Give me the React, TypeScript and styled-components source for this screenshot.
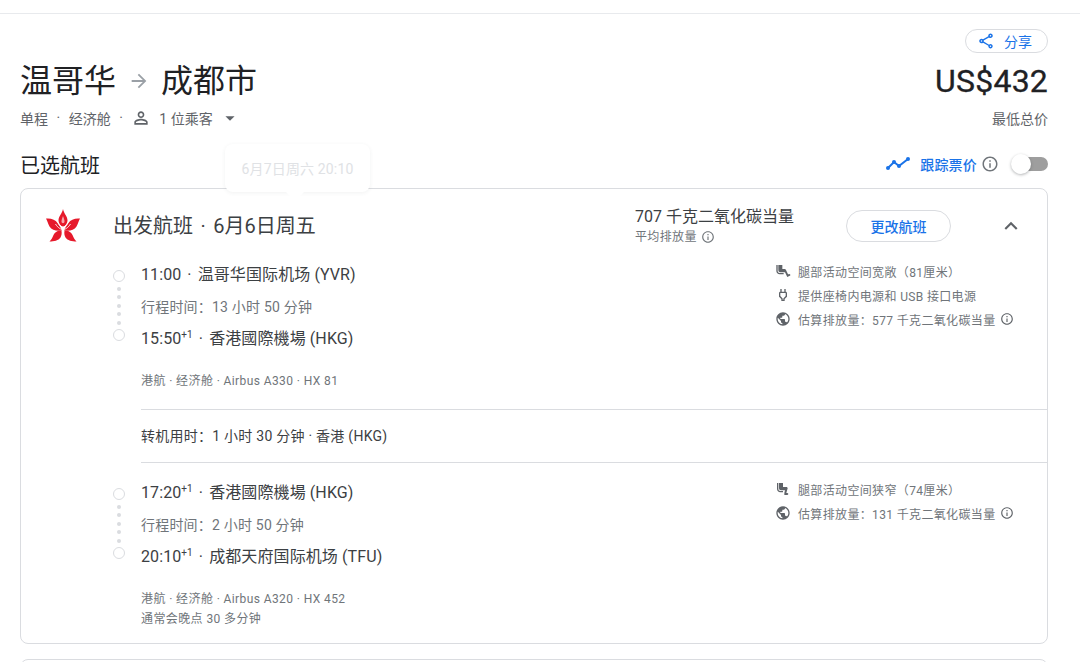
import React from 'react';
import styled, { createGlobalStyle } from 'styled-components';
import {
  MdArrowDropDown,
  MdArrowForward,
  MdInfoOutline,
  MdKeyboardArrowUp,
  MdOutlinePower,
  MdOutlineShare,
  MdPersonOutline,
  MdPublic,
  MdAirlineSeatLegroomExtra,
  MdAirlineSeatLegroomReduced,
} from 'react-icons/md';

const GlobalStyle = createGlobalStyle`
  html, body {
    margin: 0;
    padding: 0;
    background: #fff;
    font-family: Roboto, "Noto Sans CJK SC", "Liberation Sans", sans-serif;
    color: #202124;
  }
`;

const Page = styled.div`
  position: relative;
  width: 1080px;
  height: 662px;
  overflow: hidden;
  box-sizing: border-box;
  padding: 13px 32px 0 20px;
  background: #fff;
`;

const TopRule = styled.div`
  height: 1px;
  margin: 0 -32px 15px -20px;
  background: #e8eaed;
`;

const ShareRow = styled.div`
  display: flex;
  justify-content: flex-end;
  height: 24px;
`;

const ShareButton = styled.button`
  display: flex;
  align-items: center;
  justify-content: center;
  gap: 9px;
  box-sizing: border-box;
  width: 83px;
  height: 24px;
  padding: 0 4px 0 0;
  background: #fff;
  border: 1px solid #dadce0;
  border-radius: 12px;
  color: #1a73e8;
  font: inherit;
  font-size: 14px;
  svg {
    font-size: 18px;
  }
`;

const TitleRow = styled.div`
  display: flex;
  justify-content: space-between;
  align-items: center;
  height: 40px;
  margin-top: 8px;
`;

const Route = styled.h1`
  display: flex;
  align-items: center;
  margin: 0;
  font-size: 32px;
  font-weight: 400;
  line-height: 40px;
  svg {
    margin: 0 11px 0 12px;
    font-size: 22px;
    color: #9aa0a6;
  }
`;

const Price = styled.div`
  font-size: 32px;
  font-weight: 400;
  line-height: 40px;
  letter-spacing: 0.2px;
  -webkit-text-stroke: 0.3px #202124;
`;

const InfoRow = styled.div`
  display: flex;
  justify-content: space-between;
  align-items: center;
  height: 20px;
  margin-top: 7px;
  font-size: 14px;
  color: #5f6368;
`;

const TripMeta = styled.div`
  display: flex;
  align-items: center;
`;

const MetaDot = styled.span`
  margin: 0 8.5px;
`;

const PersonIcon = styled(MdPersonOutline)`
  margin: 0 8px 0 0;
  font-size: 20px;
`;

const Caret = styled(MdArrowDropDown)`
  margin-left: 6px;
  font-size: 22px;
`;

const SelectedRow = styled.div`
  display: flex;
  justify-content: space-between;
  align-items: center;
  height: 30px;
  margin-top: 21px;
`;

const SectionTitle = styled.h2`
  margin: 0;
  font-size: 20px;
  font-weight: 400;
`;

const TrackPrice = styled.div`
  display: flex;
  align-items: center;
  font-size: 14px;
  font-weight: 500;
  letter-spacing: 0.2px;
  color: #1a73e8;
`;

const TrackInfo = styled(MdInfoOutline)`
  margin: 0 13px 0 4px;
  font-size: 18px;
  color: #70757a;
`;

const TrendIcon = styled.svg`
  width: 24px;
  height: 14px;
  margin-right: 10px;
`;

const Toggle = styled.div`
  position: relative;
  width: 36px;
  height: 14px;
  border-radius: 7px;
  background: #9e9e9e;
`;

const ToggleKnob = styled.span`
  position: absolute;
  left: -1px;
  top: -3px;
  width: 20px;
  height: 20px;
  border-radius: 50%;
  background: #fff;
  box-shadow: 0 1px 3px rgba(60, 64, 67, 0.4);
`;

const Tooltip = styled.div`
  position: absolute;
  left: 225px;
  top: 144px;
  z-index: 2;
  display: flex;
  align-items: center;
  justify-content: center;
  width: 145px;
  height: 48px;
  border-radius: 8px;
  background: #fff;
  box-shadow: 0 1px 4px rgba(60, 64, 67, 0.07);
  font-size: 14px;
  letter-spacing: 0.15px;
  color: #e0e2e5;
  &::after {
    content: '';
    position: absolute;
    left: 60px;
    bottom: -9px;
    width: 0;
    height: 0;
    border-left: 10px solid transparent;
    border-right: 10px solid transparent;
    border-top: 10px solid #fff;
  }
`;

const Card = styled.section`
  box-sizing: border-box;
  height: 456px;
  margin-top: 9px;
  border: 1px solid #dadce0;
  border-radius: 8px;
`;

const CardHeader = styled.div`
  display: grid;
  grid-template-columns: 92px 522px 211px 105px 1fr;
  align-items: center;
  box-sizing: border-box;
  height: 70px;
  padding-top: 3px;
`;

const LogoCell = styled.div`
  display: flex;
  justify-content: flex-start;
  padding-left: 25px;
`;

const FlightTitle = styled.div`
  font-size: 20px;
  line-height: 28px;
  color: #3c4043;
`;

const TitleDot = styled.span`
  margin: 0 2.5px;
`;

const Emissions = styled.div`
  display: flex;
  flex-direction: column;
  gap: 2px;
`;

const EmissionsValue = styled.div`
  font-size: 16px;
  line-height: 20px;
  color: #3c4043;
`;

const EmissionsNote = styled.div`
  display: flex;
  align-items: center;
  gap: 3px;
  font-size: 12px;
  line-height: 16px;
  letter-spacing: 0.35px;
  color: #70757a;
  svg {
    font-size: 14px;
    margin-left: 1px;
  }
`;

const ChangeButton = styled.button`
  width: 105px;
  height: 32px;
  padding: 0;
  background: #fff;
  border: 1px solid #dadce0;
  border-radius: 16px;
  color: #1a73e8;
  font: inherit;
  font-size: 14px;
  font-weight: 500;
`;

const Collapse = styled.div`
  display: flex;
  justify-content: center;
  padding-left: 24px;
  color: #5f6368;
  font-size: 26px;
`;

const Segment = styled.div<{ $top: number }>`
  display: grid;
  grid-template-columns: 28px 634px 1fr;
  margin-left: 92px;
  padding-top: ${(p) => p.$top}px;
`;

const Timeline = styled.div`
  display: flex;
  flex-direction: column;
  align-items: flex-start;
  gap: 4.5px;
  padding-top: 11px;
`;

const TimelineCircle = styled.span`
  box-sizing: border-box;
  width: 12px;
  height: 12px;
  border: 1.5px solid #dadce0;
  border-radius: 50%;
`;

const TimelineDot = styled.span`
  width: 4px;
  height: 4px;
  margin-left: 4px;
  border-radius: 50%;
  background: #dadce0;
`;

const StopLine = styled.div`
  height: 32px;
  font-size: 16px;
  line-height: 32px;
  letter-spacing: 0.1px;
  color: #3c4043;
`;

const PlusDay = styled.sup`
  font-size: 10px;
  line-height: 0;
  vertical-align: 6px;
`;

const Sep = styled.span`
  margin: 0 6px;
`;

const DurationLine = styled.div`
  height: 32px;
  font-size: 14px;
  line-height: 32px;
  letter-spacing: 0.2px;
  color: #70757a;
`;

const FlightMeta = styled.div`
  margin-top: 16px;
  font-size: 12px;
  line-height: 20px;
  letter-spacing: 0.4px;
  color: #70757a;
`;

const Amenities = styled.ul`
  list-style: none;
  margin: 0;
  padding: 0;
`;

const Amenity = styled.li`
  display: flex;
  align-items: center;
  gap: 7px;
  height: 24px;
  font-size: 12px;
  letter-spacing: 0.35px;
  color: #70757a;
  svg {
    flex: none;
    font-size: 16px;
    color: #5f6368;
  }
`;

const SmallInfo = styled(MdInfoOutline)`
  && {
    font-size: 14px;
    margin-left: -3px;
  }
`;

const Layover = styled.div`
  box-sizing: border-box;
  height: 54px;
  margin: 18px 0 0 120px;
  border-top: 1px solid #dadce0;
  border-bottom: 1px solid #dadce0;
  font-size: 14px;
  line-height: 52px;
  letter-spacing: 0.25px;
  color: #3c4043;
`;

const NextCard = styled.div`
  height: 40px;
  margin-top: 15px;
  border: 1px solid #dadce0;
  border-radius: 8px 8px 0 0;
`;

function AirlineLogo() {
  return (
    <svg width="34" height="33" viewBox="0 0 34 33" aria-label="港航">
      <path d="M17 0C18 5 21.500 7 21.500 11.500C21.500 14 20 16.500 17 18C14 16.500 12.500 14 12.500 11.500C12.500 7 16 5 17 0Z" fill="#e6192b" />
      <path d="M0 9.500C5 9 9.500 10.500 11.500 14C13 16.500 15 18.500 16 21.500C11 22.500 6 21.500 3.500 17.500C2 15 1.500 12 0 9.500Z" fill="#e6192b" />
      <path d="M34 9.500C29 9 24.500 10.500 22.500 14C21 16.500 19 18.500 18 21.500C23 22.500 28 21.500 30.500 17.500C32 15 32.500 12 34 9.500Z" fill="#e6192b" />
      <path d="M15.500 22C12 21 9 23 7.500 26C6.500 28.500 5.500 30.500 3.500 32.500C8 32.500 12.500 31.500 14.500 28.500C15.500 26.500 16 24.500 15.500 22Z" fill="#e6192b" />
      <path d="M18.500 22C22 21 25 23 26.500 26C27.500 28.500 28.500 30.500 30.500 32.500C26 32.500 21.500 31.500 19.500 28.500C18.500 26.500 18 24.500 18.500 22Z" fill="#e6192b" />
      <path d="M9.500 15C12 19 15 20.500 17 20.500C19 20.500 22 19 24.500 15M12 13.500C14 17 15.500 18 17 18C18.500 18 20 17 22 13.500" fill="none" stroke="#fff" strokeWidth="0.9" />
      <path d="M17 7C16 9.500 15.500 11 15.500 12.500C15.500 13.500 16.200 14.200 17 14.200C17.800 14.200 18.500 13.500 18.500 12.500C18.500 11 18 9.500 17 7Z" fill="#f7a8ae" />
    </svg>
  );
}

type Leg = {
  depart: string;
  departPlus?: boolean;
  departAirport: string;
  duration: string;
  arrive: string;
  arriveAirport: string;
  meta: string[];
  top: number;
  amenities: React.ReactNode;
};

const legs: Leg[] = [
  {
    depart: '11:00',
    departAirport: '温哥华国际机场 (YVR)',
    duration: '行程时间：13 小时 50 分钟',
    arrive: '15:50',
    arriveAirport: '香港國際機場 (HKG)',
    meta: ['港航 · 经济舱 · Airbus A330 · HX 81'],
    top: 0,
    amenities: (
      <>
        <Amenity><MdAirlineSeatLegroomExtra />腿部活动空间宽敞（81厘米）</Amenity>
        <Amenity><MdOutlinePower />提供座椅内电源和 USB 接口电源</Amenity>
        <Amenity><MdPublic />估算排放量：577 千克二氧化碳当量<SmallInfo /></Amenity>
      </>
    ),
  },
  {
    depart: '17:20',
    departPlus: true,
    departAirport: '香港國際機場 (HKG)',
    duration: '行程时间：2 小时 50 分钟',
    arrive: '20:10',
    arriveAirport: '成都天府国际机场 (TFU)',
    meta: ['港航 · 经济舱 · Airbus A320 · HX 452', '通常会晚点 30 多分钟'],
    top: 14,
    amenities: (
      <>
        <Amenity><MdAirlineSeatLegroomReduced />腿部活动空间狭窄（74厘米）</Amenity>
        <Amenity><MdPublic />估算排放量：131 千克二氧化碳当量<SmallInfo /></Amenity>
      </>
    ),
  },
];

function LegRow({ leg }: { leg: Leg }) {
  return (
    <Segment $top={leg.top}>
      <Timeline>
        <TimelineCircle />
        <TimelineDot />
        <TimelineDot />
        <TimelineDot />
        <TimelineDot />
        <TimelineDot />
        <TimelineCircle />
      </Timeline>
      <div>
        <StopLine>
          {leg.depart}
          {leg.departPlus && <PlusDay>+1</PlusDay>}
          <Sep>·</Sep>
          {leg.departAirport}
        </StopLine>
        <DurationLine>{leg.duration}</DurationLine>
        <StopLine>
          {leg.arrive}
          <PlusDay>+1</PlusDay>
          <Sep>·</Sep>
          {leg.arriveAirport}
        </StopLine>
        <FlightMeta>
          {leg.meta.map((line) => (
            <div key={line}>{line}</div>
          ))}
        </FlightMeta>
      </div>
      <Amenities>{leg.amenities}</Amenities>
    </Segment>
  );
}

export default function App() {
  return (
    <Page>
      <GlobalStyle />
      <TopRule />
      <ShareRow>
        <ShareButton>
          <MdOutlineShare />
          分享
        </ShareButton>
      </ShareRow>
      <TitleRow>
        <Route>
          温哥华
          <MdArrowForward />
          成都市
        </Route>
        <Price>US$432</Price>
      </TitleRow>
      <InfoRow>
        <TripMeta>
          单程<MetaDot>·</MetaDot>经济舱<MetaDot>·</MetaDot>
          <PersonIcon />1 位乘客
          <Caret />
        </TripMeta>
        <span>最低总价</span>
      </InfoRow>
      <SelectedRow>
        <SectionTitle>已选航班</SectionTitle>
        <TrackPrice>
          <TrendIcon viewBox="0 0 24 14">
            <path d="M2 11L8 5L13 9L22 2" fill="none" stroke="#1a73e8" strokeWidth="2" />
            <circle cx="2" cy="11" r="2" fill="#1a73e8" />
            <circle cx="8" cy="5" r="2" fill="#1a73e8" />
            <circle cx="13" cy="9" r="2" fill="#1a73e8" />
            <circle cx="22" cy="2" r="2" fill="#1a73e8" />
          </TrendIcon>
          跟踪票价
          <TrackInfo />
          <Toggle>
            <ToggleKnob />
          </Toggle>
        </TrackPrice>
      </SelectedRow>
      <Tooltip>6月7日周六 20:10</Tooltip>
      <Card>
        <CardHeader>
          <LogoCell>
            <AirlineLogo />
          </LogoCell>
          <FlightTitle>
            出发航班 <TitleDot>·</TitleDot> 6月6日周五
          </FlightTitle>
          <Emissions>
            <EmissionsValue>707 千克二氧化碳当量</EmissionsValue>
            <EmissionsNote>
              平均排放量
              <MdInfoOutline />
            </EmissionsNote>
          </Emissions>
          <ChangeButton>更改航班</ChangeButton>
          <Collapse>
            <MdKeyboardArrowUp />
          </Collapse>
        </CardHeader>
        <LegRow leg={legs[0]} />
        <Layover>转机用时：1 小时 30 分钟 · 香港 (HKG)</Layover>
        <LegRow leg={legs[1]} />
      </Card>
      <NextCard />
    </Page>
  );
}
